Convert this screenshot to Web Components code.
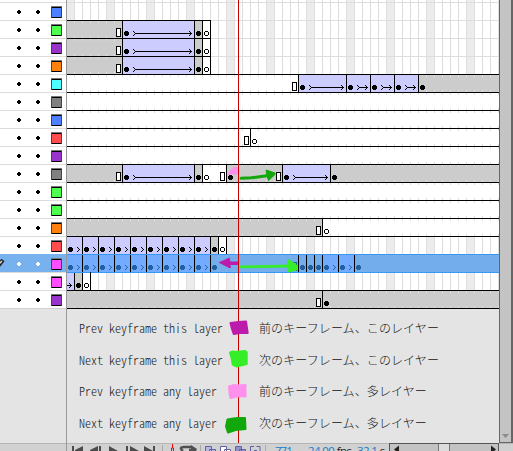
<!DOCTYPE html>
<html lang="ja"><head><meta charset="utf-8"><title>Timeline</title>
<style>html,body{margin:0;width:513px;height:451px;overflow:hidden;background:#e4e4e4}</style></head>
<body><timeline-app></timeline-app>
<script>
const make=(el,html)=>{el.attachShadow({mode:'open'}).innerHTML=html;};

/* A run of frames: 8px per frame, with its keyframe marks */
customElements.define('frame-span',class extends HTMLElement{
 connectedCallback(){
  const n=+this.getAttribute('n'),k=this.getAttribute('kind'),m=this.getAttribute('marks')||'',w=n*8;
  const sel=this.hasAttribute('sel');
  const bg=sel?(k==='tween'?'#73acff':'#73adeb'):({tween:'#ccccff',fill:'#cccccc',blank:'#ffffff'})[k];
  const ink=sel?'#235f9f':'#000';
  let g='';
  if(m.includes('l'))g+=`<path fill="#000" d="M0 0h1v17h-1z"/>`;
  if(m.includes('d'))g+=`<path fill="${ink}" d="M3 10h3v1h1v3h-1v1h-3v-1h-1v-3h1z"/>`;
  if(m.includes('o'))g+=`<path fill="${ink}" fill-rule="evenodd" d="M3 10h3v1h1v3h-1v1h-3v-1h-1v-3h1zM3 11v3h3v-3z"/>`;
  if(m.includes('r'))g+=`<path fill="${ink}" d="M${w-6} 7h5v9h-5z"/><path fill="${sel?bg:'#fff'}" d="M${w-5} 8h3v7h-3z"/>`;
  if(m.includes('t')||m.includes('a'))g+=`<path fill="${ink}" d="M11 10h1v1h1v1h1v1h-1v1h-1v1h-1v-1h1v-1h1v-1h-1v-1h-1z"/>`;
  if(m.includes('a'))g+=`<path fill="${ink}" d="M13 12h${w-16}v1h-${w-16}z"/>`;
  if(m.includes('a')||m.includes('h'))g+=`<path fill="${ink}" d="M${w-5} 10h1v1h1v1h1v1h-1v1h-1v1h-1v-1h1v-1h1v-1h-1v-1h-1z"/>`;
  if(m.includes('h'))g+=`<path fill="${ink}" d="M0 12h${w-3}v1H0z"/>`;
  const tick=sel?'#82b5ee':'#dedede';
  const ticks=k==='tween'?'':`background-image:repeating-linear-gradient(90deg,${tick} 0 1px,transparent 1px 8px),repeating-linear-gradient(90deg,${tick} 0 1px,transparent 1px 8px);background-size:100% 2px;background-position:0 0,0 100%;background-repeat:no-repeat;`;
  make(this,`<style>:host{display:block;flex:none;box-sizing:border-box;width:${w}px;height:18px;border-top:1px solid var(--edge,#000);background-color:${bg};${ticks}${m.includes('e')?'box-shadow:1px 0 0 #000;':''}}svg{display:block}</style><svg width="${w}" height="17" shape-rendering="crispEdges">${g}</svg>`);
 }});

customElements.define('layer-row',class extends HTMLElement{
 connectedCallback(){
  const sel=this.hasAttribute('sel'),c=this.getAttribute('color'),d=sel?'#fff':'#000';
  make(this,`<style>
  :host{display:flex;height:18px}
  .head{flex:none;width:66px;height:18px;box-sizing:border-box;border-top:1px solid ${sel?'#77b1ee':'#dcdcdc'};background:${sel?'#77b1ee':'#fff'}}
  .head svg{display:block}
  .track{flex:none;width:433px;height:18px;display:flex;overflow:hidden;background:
   linear-gradient(var(--line,#dedede),var(--line,#dedede)) 0 0/100% 1px no-repeat,
   repeating-linear-gradient(90deg,#dedede 0 1px,transparent 1px 8px),
   repeating-linear-gradient(90deg,#dedede 0 1px,#ececec 1px 8px,#fff 8px 40px)}
  </style><div class="head"><svg width="66" height="17" shape-rendering="crispEdges">
  <path fill="${d}" d="M18 7h2v1h1v2h-1v1h-2v-1h-1v-2h1zM37 7h2v1h1v2h-1v1h-2v-1h-1v-2h1z"/>
  <path fill="#000" d="M51 3h11v12h-11z"/><path fill="#777" d="M51 3h11v1h-11z"/><path fill="#444" d="M51 4h1v11h-1zM61 4h1v11h-1z"/><path fill="${c}" d="M52 5h9v9h-9z"/>
  ${sel?'<g shape-rendering="auto"><path d="M-2 11 3 5" stroke="#222" stroke-width="4"/><path d="M-2 10 2 6" stroke="#ddd" stroke-width="1.4"/></g>':''}
  </svg></div><div class="track"><slot></slot></div>`);
 }});

customElements.define('legend-line',class extends HTMLElement{
 connectedCallback(){make(this,`<style>:host{display:flex;align-items:center;height:16px;color:#111;white-space:pre}
 .en{width:180px;font:300 12px/16px "Noto Sans CJK JP",monospace;font-feature-settings:"hwid" 1;font-kerning:none}
 .ja{font:300 12px/16px "Noto Sans CJK JP",sans-serif;letter-spacing:.1px}</style>
 <div class="en"><slot name="en"></slot></div><div class="ja"><slot name="ja"></slot></div>`);}});

customElements.define('v-scroll',class extends HTMLElement{
 connectedCallback(){make(this,`<style>:host{display:flex;align-items:flex-end;box-sizing:border-box;width:14px;height:443px;background:#c4c4c4;border-left:1px solid #666;border-right:2px solid #666;border-bottom:1px solid #666}</style>
 <svg width="11" height="11"><path fill="#8b8b8b" d="M2 3h7l-3.5 4z"/></svg>`);}});

customElements.define('status-bar',class extends HTMLElement{
 connectedCallback(){make(this,`<style>:host{display:grid;grid-template-columns:66px 204px 33px 50px 36px 110px 14px;height:8px;overflow:hidden;background:#d1d1d1;box-shadow:inset 0 1px #b5b5b5;font:11.5px/14px "Open Sans",sans-serif;letter-spacing:-.3px;color:#222;white-space:nowrap}
 svg{display:block}b{font-weight:400;color:#1b78c8}.n{padding-top:1px;height:14px}
 .f{letter-spacing:-.6px}
 .h{box-sizing:border-box;display:flex;height:8px;background:#c3c3c3;border:solid #555;border-width:1px 1px 0}
 </style><span></span>
 <svg width="204" height="8"><g fill="#4b4b4b"><path d="M6 3h2v5H6zM17 3v5H9v-1zM32 3v5h-8v-1zM33 3h2v5h-2zM43 3l9 5h-9zM60 3h2v5h-2zM64 3l9 5h-9zM78 3l9 5h-9zM87 3h2v5h-2z"/></g>
 <path d="M96.500 2v6M134.500 2v6M199.500 2v6" stroke="#aaa"/>
 <path d="M106.500 1v4M105.500 8V5h2v3" stroke="#f00" fill="none"/>
 <path d="M117 8c-4-3-2-4.500 4-4h5M123 7h6" stroke="#505050" stroke-width="2.500" fill="none"/><path fill="#505050" d="M125 2l6 4-1 2h-5z"/>
 <g fill="#fff" stroke="#6262a0"><path fill="#b7b7e4" d="M139.500 3.500h6v5h-6zM143.500 6.500h6v3h-6z"/><path d="M154.500 3.500h6v5h-6zM158.500 6.500h6v3h-6z"/><path fill="#9191c7" d="M169.500 3.500h6v5h-6zM173.500 6.500h6v3h-6z"/><path fill="none" d="M188 3.500h-3.500V9M190.500 3.500h3.500V9M188 7.500h3"/></g></svg>
 <span class="n" style="padding-left:5px;letter-spacing:-1px"><b>771</b></span><span class="n f" style="padding-left:5px"><b>24.00</b> fps</span><span class="n f" style="padding-left:4px"><b>32.1</b> s</span>
 <div class="h"><svg width="108" height="7"><path fill="#222" d="M4 5.500l5-4v8zM106 5.500l-5-4v8z"/><path fill="#ddd" stroke="#777" d="M48.500 -1h11v12h-11z"/></svg></div><span></span>`);}});

/* n, kind, marks — l line, d key, o empty key, r hold end, a arrow, t tail, h head, e closing line */
const block=[[7,'fill','r'],[9,'tween','lda'],[1,'fill','ld'],[1,'blank','loe']];
const blank=[[54.125,'blank','']];
const runs=Array.from({length:9},(_,i)=>[2,'tween',(i?'l':'')+'dt']);
const rows=[
['#4d80ff',[]],['#4dff4d',block],['#9933cc',block],['#ff800d',block],
['#4dffff',[[29,'blank','r'],[6,'tween','lda'],[3,'tween','lda'],[3,'tween','lda'],[3,'tween','lda'],[10.125,'fill','ld']]],
['#808080',blank],['#4d80ff',blank],
['#ff4d4d',[[23,'blank','r'],[31.125,'blank','lo']]],
['#9933cc',blank],
['#808080',[[7,'fill','r'],[9,'tween','lda'],[1,'fill','ld'],[3,'blank','lor'],[7,'fill','ldr'],[6,'tween','lda'],[21.125,'fill','ld']]],
['#4dff4d',blank],['#4dff4d',blank],
['#ff800d',[[32,'fill','r'],[22.125,'blank','lo']]],
['#ff4d4d',[...runs,[1,'fill','ld'],[1,'blank','loe']],'--line:#000'],
['#ff4dff',[...runs,[11,'fill','ldr'],[1,'fill','ld'],[1,'fill','ld'],[1,'fill','ld'],[2,'tween','ldt'],[2,'tween','ldt'],[18.125,'fill','ld']],'--edge:#3797f8',1],
['#ff4dff',[[1,'tween','h'],[1,'fill','ld'],[1,'blank','loe']],'--edge:#3797f8;--line:#3797f8'],
['#9933cc',[[32,'fill','r'],[22.125,'fill','ld']]]];
const legend=[['Prev keyframe this layer','前のキーフレーム、このレイヤー'],['Next keyframe this layer','次のキーフレーム、このレイヤー'],['Prev keyframe any layer','前のキーフレーム、多レイヤー'],['Next keyframe any layer','次のキーフレーム、多レイヤー']];

customElements.define('timeline-app',class extends HTMLElement{
 connectedCallback(){make(this,`<style>
 :host{display:block;position:relative;width:513px;height:451px;overflow:hidden;background:#e4e4e4}
 .main{display:flex;height:443px}.left{width:499px}
 .cap{height:2px;padding-left:66px;background:#fff}
 .cap i{display:block;height:2px;background:repeating-linear-gradient(90deg,#dedede 0 1px,transparent 1px 8px),repeating-linear-gradient(90deg,#dedede 0 1px,#ececec 1px 8px,#fff 8px 40px)}
 .foot{height:1px;background:linear-gradient(90deg,#d0d0d0 66px,#000 66px)}
 .legend{padding:11px 0 0 79px;display:grid;row-gap:15.700px}
 .over{position:absolute;left:0;top:0;pointer-events:none}
 </style><div class="main"><div class="left"><div class="cap"><i></i></div>
 ${rows.map(([c,s,st,sel])=>`<layer-row color="${c}" style="${st||''}" ${sel?'sel':''}>${s.map(([n,k,m])=>`<frame-span n="${n}" kind="${k}" marks="${m}" ${sel?'sel':''}></frame-span>`).join('')}</layer-row>`).join('')}
 <div class="foot"></div><div class="legend">${legend.map(([a,b])=>`<legend-line><span slot="en">${a}</span><span slot="ja">${b}</span></legend-line>`).join('')}</div></div><v-scroll></v-scroll></div>
 <status-bar></status-bar>
 <svg class="over" width="513" height="451">
 <path fill="#999" d="M66 0h1v451h-1z"/>
 <path fill="#ff90ec" d="M227.500 174l2-3 5.500-5 1 1 3 0 .5 6-4 2-2-1-5 1z"/>
 <path fill="#bd1bac" d="M218.500 262.500l11-5 1 4h8v3.500h-8l.5 3-2 0z"/>
 <path d="M241 178.300l10-.5 16-2" stroke="#12a80c" stroke-width="3" stroke-linecap="round" fill="none"/>
 <path fill="#12a80c" stroke="#12a80c" stroke-linejoin="round" d="M266 170l9 3 0 1.500-6.500 6-1.500-5z"/>
 <path d="M241 266.800l30-.5 18-.3" stroke="#35ee28" stroke-width="2.800" stroke-linecap="round" fill="none"/>
 <path fill="#35ee28" stroke="#35ee28" stroke-linejoin="round" d="M287.500 260l2 0 7 5 0 5-8 2-.5-5z"/>
 <path fill="#c80000" d="M238 0h1v443h-1z"/>
 <g stroke-width="2" stroke-linejoin="round"><path fill="#bd1bac" stroke="#bd1bac" d="M230.500 323l8-1 7.500-.5 1.700 11.500-6-.3-8 1.300-2-6z"/>
 <path fill="#35ee28" stroke="#35ee28" d="M230 352.500l3-1 2 .5 10-1 1.700 1v12l-6 1.500-4 1-4-2-1-6z"/>
 <path fill="#ff90ec" stroke="#ff90ec" d="M229 386.500l5-1.500 3 .5 8.500-.5v11.500l-7-.5-8 2-1-5z"/>
 <path fill="#12a80c" stroke="#12a80c" d="M227.500 419.500l6-1 4-.5 7.500 0 .5 11-10 1-7.500 2.500-2-6z"/></g>
 </svg>`);}});
</script></body></html>
